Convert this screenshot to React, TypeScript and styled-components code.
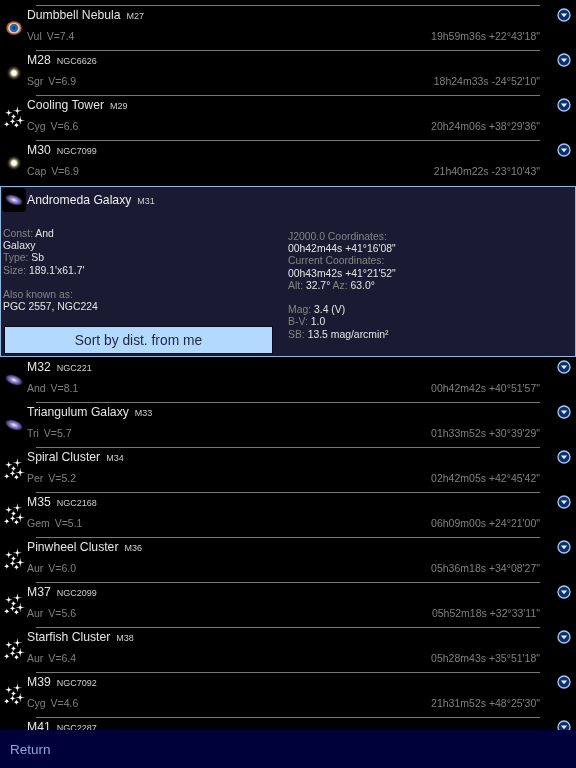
import * as React from 'react';
import styled, { createGlobalStyle } from 'styled-components';

const GlobalStyle = createGlobalStyle`
  html, body {
    margin: 0;
    padding: 0;
    background: #000;
    font-family: "Liberation Sans", Arial, sans-serif;
  }
`;

const Screen = styled.div`
  width: 576px;
  height: 768px;
  display: flex;
  flex-direction: column;
  overflow: hidden;
  background: #000;
  filter: blur(0.3px);
`;

const List = styled.div`
  flex: 1;
  min-height: 0;
  overflow: hidden;
  padding-top: 5px;
`;

const Footer = styled.div`
  flex-shrink: 0;
  height: 38px;
  display: flex;
  align-items: center;
  padding-left: 10px;
  background: #00003a;
  color: #8ba6e2;
  font-size: 13.5px;
`;

const Row = styled.div`
  height: 45px;
  box-sizing: border-box;
  display: flex;
  flex-direction: column;
`;

const Rule = styled.div<{ $hidden?: boolean }>`
  flex-shrink: 0;
  height: 1px;
  margin: 0 36px;
  background: ${({ $hidden }) => ($hidden ? 'transparent' : '#777')};
`;

const RowBody = styled.div`
  flex: 1;
  display: grid;
  grid-template-columns: 27px 1fr 36px;
  grid-template-rows: 19px 22px;
`;

const IconCell = styled.div`
  grid-row: 1 / 3;
  padding: 10px 0 0 2px;
`;

const NameLine = styled.div`
  line-height: 18px;
  white-space: nowrap;
  color: #e4e4e4;
  font-size: 12.2px;
`;

const Catalog = styled.span`
  margin-left: 6px;
  font-size: 9px;
  color: #cfcfcf;
`;

const SubLine = styled.div`
  display: flex;
  justify-content: space-between;
  align-items: center;
  grid-column: 2;
  color: #808080;
  font-size: 10.5px;
`;

const Meta = styled.span`
  word-spacing: 2px;
`;

const DiscloseCell = styled.div`
  grid-column: 3;
  grid-row: 1;
  padding: 2px 0 0 17px;
  line-height: 0;
`;

const Panel = styled.div`
  height: 171px;
  margin-top: 1px;
  box-sizing: border-box;
  border: 1px solid #90b8e0;
  background: #1a1a33;
  display: flex;
  flex-direction: column;
`;

const PanelHead = styled.div`
  display: flex;
  align-items: center;
  height: 26px;
  padding-left: 1px;
  gap: 1px;
`;

const IconBadge = styled.div`
  width: 24px;
  height: 24px;
  border-radius: 4px;
  background: #000;
  display: flex;
  align-items: center;
  justify-content: center;
`;

const PanelTitle = styled.div`
  color: #eeeeee;
  font-size: 12.2px;
`;

const PanelColumns = styled.div`
  flex: 1;
  display: grid;
  grid-template-columns: 287px 1fr;
`;

const LeftColumn = styled.div`
  display: flex;
  flex-direction: column;
  padding: 15px 0 2px 2px;
`;

const RightColumn = styled.div`
  padding-top: 18px;
`;

const Info = styled.div`
  font-size: 10.4px;
  line-height: 12.2px;
  color: #e4e4e4;
  white-space: nowrap;
`;

const Label = styled.span`
  color: #858585;
`;

const Gap = styled.div`
  height: 12.2px;
`;

const SortButton = styled.button`
  margin-top: auto;
  margin-left: 1px;
  width: 269px;
  height: 28px;
  padding: 0;
  box-sizing: border-box;
  border: 1px solid #0a0a20;
  background: #b3d9ff;
  color: #1c2a3c;
  font-family: inherit;
  font-size: 13.8px;
`;

type IconKind = 'nebula' | 'star' | 'cluster' | 'galaxy';

const sparkles: [number, number, number][] = [
  [16, 5, 5], [7, 7, 4], [12, 11, 3], [19, 15, 5],
  [11, 16, 3.5], [5, 19, 3], [15, 20, 3],
];

function ObjectIcon({ kind }: { kind: IconKind }) {
  return (
    <svg width="24" height="24" viewBox="0 0 25 25">
      <defs>
        <radialGradient id="star-glow">
          <stop offset="0" stopColor="#fff" />
          <stop offset="0.28" stopColor="#fffbe8" />
          <stop offset="0.5" stopColor="#6e6a50" />
          <stop offset="1" stopColor="#000" stopOpacity="0" />
        </radialGradient>
        <radialGradient id="galaxy-glow">
          <stop offset="0" stopColor="#f4f0ff" />
          <stop offset="0.35" stopColor="#9a8fd8" />
          <stop offset="0.75" stopColor="#4a3a78" />
          <stop offset="1" stopColor="#000" stopOpacity="0" />
        </radialGradient>
      </defs>
      {kind === 'nebula' && (
        <g>
          <ellipse cx="12.5" cy="12.5" rx="8" ry="7" fill="#c9622a" />
          <ellipse cx="12.5" cy="12.5" rx="6" ry="5.4" fill="#e8dcc8" />
          <circle cx="12.5" cy="12.5" r="4.4" fill="#1e6cb4" />
          <circle cx="12.5" cy="12.5" r="1.5" fill="#0c2f66" />
        </g>
      )}
      {kind === 'star' && <circle cx="12.5" cy="12.5" r="8.5" fill="url(#star-glow)" />}
      {kind === 'galaxy' && (
        <ellipse cx="12.5" cy="12.5" rx="10.5" ry="5.5" fill="url(#galaxy-glow)" transform="rotate(20 12.5 12.5)" />
      )}
      {kind === 'cluster' &&
        sparkles.map(([x, y, r], i) => (
          <g key={i} fill="#fff">
            <circle cx={x} cy={y} r="1.4" />
            <path
              d={`M${x} ${y - r}L${x + 0.7} ${y}L${x} ${y + r}L${x - 0.7} ${y}Z M${x - r} ${y}L${x} ${y - 0.7}L${x + r} ${y}L${x} ${y + 0.7}Z`}
            />
          </g>
        ))}
    </svg>
  );
}

function DiscloseIcon() {
  return (
    <svg width="14" height="14" viewBox="0 0 14 14">
      <circle cx="7" cy="7" r="6" fill="#0c2f6e" stroke="#a9c8f0" strokeWidth="1.3" />
      <path d="M3.8 5.4h6.4L7 9.2Z" fill="#e8f0ff" />
    </svg>
  );
}

interface Sky {
  name: string;
  catalog: string;
  con?: string;
  mag?: string;
  coords?: string;
  icon: IconKind;
}

const before: Sky[] = [
  { name: 'Dumbbell Nebula', catalog: 'M27', con: 'Vul', mag: '7.4', coords: `19h59m36s +22°43'18"`, icon: 'nebula' },
  { name: 'M28', catalog: 'NGC6626', con: 'Sgr', mag: '6.9', coords: `18h24m33s -24°52'10"`, icon: 'star' },
  { name: 'Cooling Tower', catalog: 'M29', con: 'Cyg', mag: '6.6', coords: `20h24m06s +38°29'36"`, icon: 'cluster' },
  { name: 'M30', catalog: 'NGC7099', con: 'Cap', mag: '6.9', coords: `21h40m22s -23°10'43"`, icon: 'star' },
];

const after: Sky[] = [
  { name: 'M32', catalog: 'NGC221', con: 'And', mag: '8.1', coords: `00h42m42s +40°51'57"`, icon: 'galaxy' },
  { name: 'Triangulum Galaxy', catalog: 'M33', con: 'Tri', mag: '5.7', coords: `01h33m52s +30°39'29"`, icon: 'galaxy' },
  { name: 'Spiral Cluster', catalog: 'M34', con: 'Per', mag: '5.2', coords: `02h42m05s +42°45'42"`, icon: 'cluster' },
  { name: 'M35', catalog: 'NGC2168', con: 'Gem', mag: '5.1', coords: `06h09m00s +24°21'00"`, icon: 'cluster' },
  { name: 'Pinwheel Cluster', catalog: 'M36', con: 'Aur', mag: '6.0', coords: `05h36m18s +34°08'27"`, icon: 'cluster' },
  { name: 'M37', catalog: 'NGC2099', con: 'Aur', mag: '5.6', coords: `05h52m18s +32°33'11"`, icon: 'cluster' },
  { name: 'Starfish Cluster', catalog: 'M38', con: 'Aur', mag: '6.4', coords: `05h28m43s +35°51'18"`, icon: 'cluster' },
  { name: 'M39', catalog: 'NGC7092', con: 'Cyg', mag: '4.6', coords: `21h31m52s +48°25'30"`, icon: 'cluster' },
  { name: 'M41', catalog: 'NGC2287', icon: 'star' },
];

function SkyRow({ item, noRule }: { item: Sky; noRule?: boolean }) {
  return (
    <Row>
      <Rule $hidden={noRule} />
      <RowBody>
        <IconCell>
          <ObjectIcon kind={item.icon} />
        </IconCell>
        <NameLine>
          {item.name}
          <Catalog>{item.catalog}</Catalog>
        </NameLine>
        <DiscloseCell>
          <DiscloseIcon />
        </DiscloseCell>
        {item.coords && (
          <SubLine>
            <Meta>{item.con} V={item.mag}</Meta>
            <span>{item.coords}</span>
          </SubLine>
        )}
      </RowBody>
    </Row>
  );
}

function DetailPanel() {
  return (
    <Panel>
      <PanelHead>
        <IconBadge>
          <ObjectIcon kind="galaxy" />
        </IconBadge>
        <PanelTitle>
          Andromeda Galaxy
          <Catalog>M31</Catalog>
        </PanelTitle>
      </PanelHead>
      <PanelColumns>
        <LeftColumn>
          <Info><Label>Const: </Label>And</Info>
          <Info>Galaxy</Info>
          <Info><Label>Type: </Label>Sb</Info>
          <Info><Label>Size: </Label>189.1'x61.7'</Info>
          <Gap />
          <Info><Label>Also known as:</Label></Info>
          <Info>PGC 2557, NGC224</Info>
          <SortButton>Sort by dist. from me</SortButton>
        </LeftColumn>
        <RightColumn>
          <Info><Label>J2000.0 Coordinates:</Label></Info>
          <Info>00h42m44s +41°16'08"</Info>
          <Info><Label>Current Coordinates:</Label></Info>
          <Info>00h43m42s +41°21'52"</Info>
          <Info><Label>Alt: </Label>32.7° <Label>Az: </Label>63.0°</Info>
          <Gap />
          <Info><Label>Mag: </Label>3.4 (V)</Info>
          <Info><Label>B-V: </Label>1.0</Info>
          <Info><Label>SB: </Label>13.5 mag/arcmin²</Info>
        </RightColumn>
      </PanelColumns>
    </Panel>
  );
}

export default function App() {
  return (
    <Screen>
      <GlobalStyle />
      <List>
        {before.map((item) => (
          <SkyRow key={item.name} item={item} />
        ))}
        <DetailPanel />
        {after.map((item, i) => (
          <SkyRow key={item.name} item={item} noRule={i === 0} />
        ))}
      </List>
      <Footer>Return</Footer>
    </Screen>
  );
}
